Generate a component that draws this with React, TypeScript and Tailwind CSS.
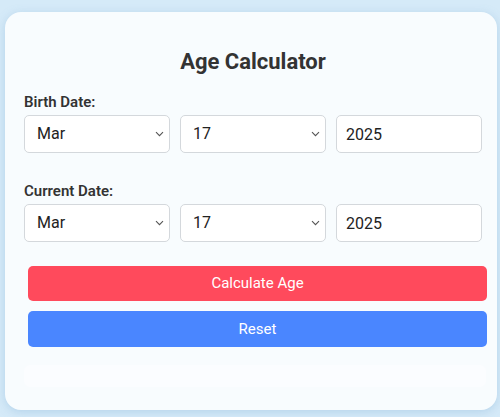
import { useState } from "react";

const MONTHS = ["Jan", "Feb", "Mar", "Apr", "May", "Jun", "Jul", "Aug", "Sep", "Oct", "Nov", "Dec"];
const DAYS = Array.from({ length: 31 }, (_, i) => String(i + 1));

function Chevron() {
  return (
    <svg
      className="pointer-events-none absolute right-[6px] top-1/2 -translate-y-1/2"
      width="9"
      height="6"
      viewBox="0 0 9 6"
      fill="none"
    >
      <path d="M1 1.2 4.5 4.7 8 1.2" stroke="#555" strokeWidth="1.1" />
    </svg>
  );
}

function DateRow({ label }: { label: string }) {
  const [month, setMonth] = useState("Mar");
  const [day, setDay] = useState("17");
  const [year, setYear] = useState("2025");

  return (
    <div className="flex flex-col">
      <label className="h-[22px] text-[15px] font-semibold leading-[22px] text-[#333]">{label}</label>
      <div className="mt-[2px] grid grid-cols-[146px_146px_146px] gap-[10px]">
        <div className="relative">
          <select
            value={month}
            onChange={(e) => setMonth(e.target.value)}
            className="h-[38px] w-full appearance-none rounded-[5px] border border-[#d4d8dc] bg-white pl-[12px] text-[16px] text-[#222] outline-none"
          >
            {MONTHS.map((m) => (
              <option key={m}>{m}</option>
            ))}
          </select>
          <Chevron />
        </div>
        <div className="relative">
          <select
            value={day}
            onChange={(e) => setDay(e.target.value)}
            className="h-[38px] w-full appearance-none rounded-[5px] border border-[#d4d8dc] bg-white pl-[12px] text-[16px] text-[#222] outline-none"
          >
            {DAYS.map((d) => (
              <option key={d}>{d}</option>
            ))}
          </select>
          <Chevron />
        </div>
        <input
          value={year}
          onChange={(e) => setYear(e.target.value)}
          className="h-[38px] w-full rounded-[5px] border border-[#d4d8dc] bg-white pl-[9px] text-[16px] text-[#222] outline-none"
        />
      </div>
    </div>
  );
}

export default function App() {
  return (
    <div
      className="min-h-[417px] w-[500px] bg-[#d5eaf8] pl-[5px] pt-[12px]"
      style={{ fontFamily: "Roboto, 'Liberation Sans', sans-serif" }}
    >
      <div className="flex h-[398px] w-[492px] flex-col rounded-[16px] bg-[#f8fcfe] pl-[19px] pt-[36px] shadow-[0_2px_10px_rgba(120,170,210,0.35)]">
        <h1 className="w-[458px] text-center text-[22px] font-bold leading-[28px] text-[#333]">Age Calculator</h1>
        <div className="mt-[15px]">
          <DateRow label="Birth Date:" />
        </div>
        <div className="mt-[27px]">
          <DateRow label="Current Date:" />
        </div>
        <div className="ml-[4px] mt-[24px] flex w-[459px] flex-col gap-[10px]">
          <button className="h-[35px] rounded-[5px] bg-[#ff4a5c] text-[15px] text-white">Calculate Age</button>
          <button className="h-[36px] rounded-[5px] bg-[#4a86ff] text-[15px] text-white">Reset</button>
        </div>
        <div className="mt-[18px] h-[22px] w-[462px] rounded-[6px] bg-[#fbfdff]" />
      </div>
    </div>
  );
}
